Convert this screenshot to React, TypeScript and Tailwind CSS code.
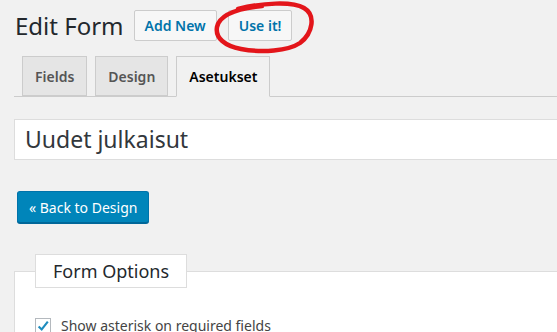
const font = "font-['Segoe_UI','Noto_Sans',sans-serif]";

function Tab({ label, active = false }: { label: string; active?: boolean }) {
  return (
    <div
      className={`flex items-center px-[12px] border border-[#ccc] text-[14px] font-semibold ${
        active
          ? "bg-[#f1f1f1] text-black border-b-[#f1f1f1] mb-[-1px] h-[41px]"
          : "bg-[#e5e5e5] text-[#555] h-[40px]"
      }`}
    >
      {label}
    </div>
  );
}

export default function App() {
  return (
    <div className={`relative w-[557px] h-[332px] overflow-hidden bg-[#f1f1f1] ${font}`}>
      <div className="w-[700px] pl-[14px] pt-[10px]">
        {/* header */}
        <div className="flex items-center h-[31px]">
          <h1 className="text-[24px] text-[#23282d] leading-none ml-[1px]">Edit Form</h1>
          <button className="ml-[10px] h-[31px] px-[10px] border border-[#ccc] bg-[#f7f7f7] rounded-[2px] text-[14px] font-semibold text-[#0073aa]">
            Add New
          </button>
          <button className="ml-[11px] h-[31px] px-[10px] border border-[#ccc] bg-[#f7f7f7] rounded-[2px] text-[14px] font-semibold text-[#0073aa]">
            Use it!
          </button>
        </div>

        {/* tabs */}
        <div className="mt-[15px] flex items-end gap-[8px] pl-[8px] border-b border-[#ccc]">
          <Tab label="Fields" />
          <Tab label="Design" />
          <Tab label="Asetukset" active />
        </div>

        {/* title input */}
        <div className="mt-[22px] h-[41px] bg-white border border-[#ddd] flex items-center pl-[10px] text-[23px] text-[#32373c]">
          Uudet julkaisut
        </div>

        <button className="mt-[31px] ml-[3px] h-[32px] px-[11px] bg-[#0085ba] border border-[#0073aa] border-b-[#006799] rounded-[3px] text-white text-[14px] shadow-[0_1px_0_#006799]">
          « Back to Design
        </button>

        {/* options */}
        <fieldset className="mt-[31px] border border-[#ddd] bg-white pl-[20px] pb-[20px]">
          <legend className="h-[34px] px-[17px] border border-[#ddd] bg-white text-[18px] text-[#23282d] flex items-center">
            Form Options
          </legend>
          <label className="mt-[27px] flex items-center gap-[10px] text-[14px] text-[#444]">
            <span className="w-[16px] h-[16px] border border-[#b4b9be] bg-white flex items-center justify-center">
              <svg viewBox="0 0 16 16" className="w-[16px] h-[16px]">
                <path d="M3 8.5 L6.5 12 L13.5 3" fill="none" stroke="#1e8cbe" strokeWidth="2.4" />
              </svg>
            </span>
            Show asterisk on required fields
          </label>
        </fieldset>
      </div>

      {/* hand-drawn highlight */}
      <svg className="absolute left-0 top-0 pointer-events-none" width="557" height="332">
        <path
          d="M238 9 C262 3, 292 1, 304 8 C316 15, 313 33, 300 43 C288 51, 262 53, 241 49 C225 46, 215 38, 217 27 C219 17, 232 9, 262 6"
          fill="none"
          stroke="#e3151a"
          strokeWidth="4.5"
          strokeLinecap="round"
        />
      </svg>
    </div>
  );
}
